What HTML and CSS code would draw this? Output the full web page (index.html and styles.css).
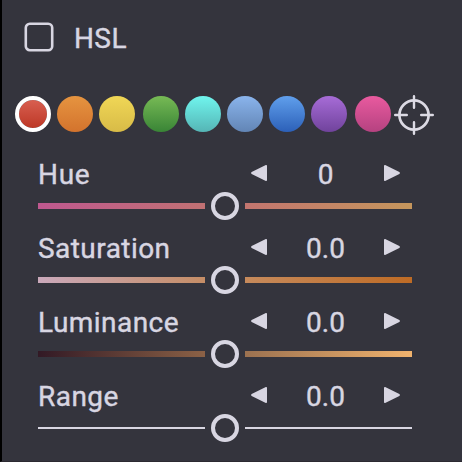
FILE: index.html
```html
<!DOCTYPE html>
<html lang="en">
<head>
<meta charset="utf-8">
<title>HSL</title>
<link rel="stylesheet" href="styles.css">
</head>
<body>
<main class="panel">
  <header class="title"><svg class="checkbox" viewBox="0 0 30 30"><rect x="1.8" y="1.8" width="26.4" height="26.4" rx="4"/></svg><h1>HSL</h1></header>
  <div class="swatches">
    <span class="swatch red"></span>
    <span class="swatch orange"></span>
    <span class="swatch yellow"></span>
    <span class="swatch green"></span>
    <span class="swatch aqua"></span>
    <span class="swatch sky"></span>
    <span class="swatch blue"></span>
    <span class="swatch purple"></span>
    <span class="swatch pink"></span>
    <svg class="target" viewBox="0 0 42 42" width="42" height="42" fill="none" stroke="#dcdae4"><circle cx="21" cy="21" r="14.6" stroke-width="2.7"/><path stroke-width="2.4" stroke-linecap="round" d="M21 2.2v11.6M21 28.2v11.6M2.2 21h11.6M28.2 21h11.6"/></svg>
  </div>
  <section class="control">
    <div class="row"><span class="label t-hue">Hue</span><svg class="arrow" viewBox="0 0 18 18"><path d="M16.2 1.8 2 8.8v.4l14.2 7z"/></svg><span class="value">0</span><svg class="arrow" viewBox="0 0 18 18"><path d="M1.8 1.8v14.4L16 9.2v-.4z"/></svg></div>
    <div class="slider"><span class="track hue-low"></span><span class="knob"></span><span class="track hue-high"></span></div>
  </section>
  <section class="control">
    <div class="row"><span class="label t-sat">Saturation</span><svg class="arrow" viewBox="0 0 18 18"><path d="M16.2 1.8 2 8.8v.4l14.2 7z"/></svg><span class="value">0.0</span><svg class="arrow" viewBox="0 0 18 18"><path d="M1.8 1.8v14.4L16 9.2v-.4z"/></svg></div>
    <div class="slider"><span class="track sat-low"></span><span class="knob"></span><span class="track sat-high"></span></div>
  </section>
  <section class="control">
    <div class="row"><span class="label t-lum">Luminance</span><svg class="arrow" viewBox="0 0 18 18"><path d="M16.2 1.8 2 8.8v.4l14.2 7z"/></svg><span class="value">0.0</span><svg class="arrow" viewBox="0 0 18 18"><path d="M1.8 1.8v14.4L16 9.2v-.4z"/></svg></div>
    <div class="slider"><span class="track lum-low"></span><span class="knob"></span><span class="track lum-high"></span></div>
  </section>
  <section class="control">
    <div class="row"><span class="label t-range">Range</span><svg class="arrow" viewBox="0 0 18 18"><path d="M16.2 1.8 2 8.8v.4l14.2 7z"/></svg><span class="value">0.0</span><svg class="arrow" viewBox="0 0 18 18"><path d="M1.8 1.8v14.4L16 9.2v-.4z"/></svg></div>
    <div class="slider"><span class="track plain"></span><span class="knob"></span><span class="track plain"></span></div>
  </section>
</main>
</body>
</html>
```
FILE: styles.css
```css
* { box-sizing: border-box; }
body { margin: 0; background: #34343d; }
.panel {
  width: 462px;
  height: 462px;
  overflow: hidden;
  border-left: 2px solid #000;
  border-bottom: 1px solid #2c2a31;
  background: #34343d;
  color: #d8d6e2;
  font: 28px/32px Roboto, sans-serif;
  -webkit-text-stroke: 0.4px #d8d6e2;
}
.title {
  display: flex;
  align-items: center;
  gap: 20px;
  height: 73px;
  padding-left: 22px;
}
.checkbox { width: 30px; height: 30px; fill: none; stroke: #d8d6e2; stroke-width: 2.6; }
h1 { margin: 4px 0 0; font: inherit; letter-spacing: 0.4px; }
.swatches {
  display: flex;
  align-items: center;
  gap: 6px;
  height: 82px;
  margin-bottom: 1px;
  padding-left: 13px;
}
.swatch { flex: none; width: 36px; height: 36px; border-radius: 50%; }
.red { border: 4px solid #fff; background: linear-gradient(#d85f50, #bd3826) padding-box; }
.orange { background: linear-gradient(#e69440, #d3732d); }
.yellow { margin-right: 2px; background: linear-gradient(#f0d756, #d8bb47); }
.green { background: linear-gradient(#77ba55, #398436); }
.aqua { background: linear-gradient(#70f5ee, #55b5b5); }
.sky { background: linear-gradient(#8ab4ec, #6285b5); }
.blue { background: linear-gradient(#609fec, #2c60b8); }
.purple { margin-right: 2px; background: linear-gradient(#a76cd7, #70439c); }
.pink { background: linear-gradient(#e95a9f, #b54280); }
.target { flex: none; margin: 1px 0 0 -4px; }
.control { width: 374px; height: 74px; margin-left: 36px; }
.row { display: flex; align-items: center; height: 36px; }
.label { width: 212px; margin-top: 2px; white-space: nowrap; letter-spacing: 0.45px; }
.t-hue { letter-spacing: 0.7px; }
.arrow {
  flex: none;
  width: 18px;
  height: 18px;
  margin-top: -2px;
  fill: #d8d6e2;
  stroke: #d8d6e2;
  stroke-width: 1.6;
  stroke-linejoin: round;
}
.value { width: 115px; margin-top: 2px; text-align: center; }
.slider { display: flex; align-items: center; gap: 6px; height: 28px; }
.track { flex: 1; height: 6px; }
.knob { width: 28px; height: 28px; border: 4px solid #d8d6e2; border-radius: 50%; }
.plain { height: 2px; background: #d8d6e2; }
.hue-low { background: linear-gradient(90deg, #bf588f, #c17173); }
.hue-high { background: linear-gradient(90deg, #c3756f, #c5965c); }
.sat-low { background: linear-gradient(90deg, #caa9bb, #c58d66); }
.sat-high { background: linear-gradient(90deg, #c68a5c, #be6b25); }
.lum-low { background: linear-gradient(90deg, #321925, #8b6146); }
.lum-high { background: linear-gradient(90deg, #9b7150, #f1b36e); }
```
